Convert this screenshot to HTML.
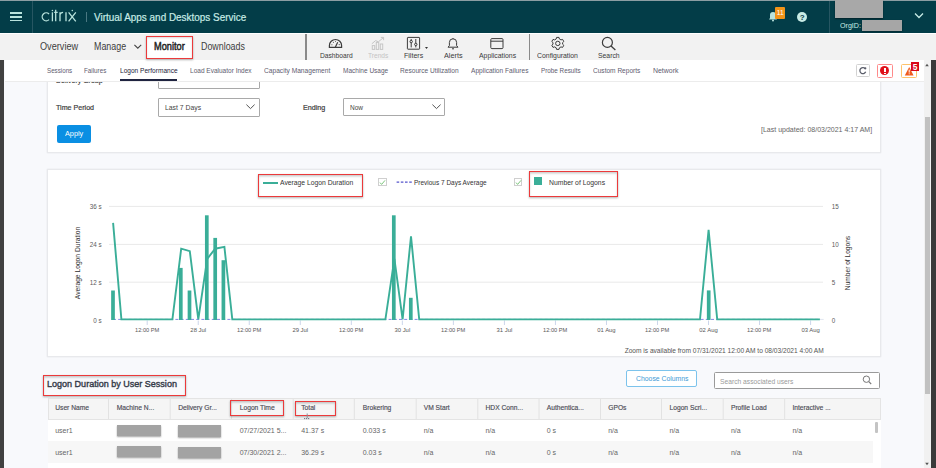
<!DOCTYPE html>
<html><head><meta charset="utf-8">
<style>
*{box-sizing:border-box}
html,body{margin:0;padding:0;width:936px;height:468px;overflow:hidden;background:#f8f9fc;font-family:"Liberation Sans",sans-serif}
.abs{position:absolute}
.t{position:absolute;white-space:nowrap;line-height:normal;transform-origin:0 0;font-family:"Liberation Sans",sans-serif}
</style></head><body>
<!-- filter card -->
<div class="abs" style="left:46.5px;top:60px;width:834px;height:92.6px;background:#fff;border:1px solid #e8e9ec;box-shadow:0 0 1.5px rgba(0,0,0,.10)"></div>
<div class="abs" style="left:158px;top:70px;width:101.7px;height:18.8px;background:#fff;border:1px solid #a9a9a9;border-radius:1px"></div>
<div class="abs" style="left:158px;top:98px;width:101.7px;height:18.5px;background:#fff;border:1px solid #a9a9a9;border-radius:1px"></div>
<svg class="abs" style="left:245px;top:103px" width="11" height="8" viewBox="0 0 11 8"><path d="M1.4,1.6 L5.5,5.6 L9.6,1.6" fill="none" stroke="#555" stroke-width="1"/></svg>
<div class="abs" style="left:343.2px;top:98.3px;width:101.7px;height:18.2px;background:#fff;border:1px solid #a9a9a9;border-radius:1px"></div>
<svg class="abs" style="left:431px;top:103px" width="11" height="8" viewBox="0 0 11 8"><path d="M1.4,1.6 L5.5,5.6 L9.6,1.6" fill="none" stroke="#555" stroke-width="1"/></svg>
<div class="abs" style="left:56.5px;top:125.1px;width:34.6px;height:17.6px;background:#0a8fe3;border-radius:2px"></div>

<!-- chart card -->
<div class="abs" style="left:46.5px;top:169.2px;width:834px;height:188px;background:#fff;border:1px solid #e8e9ec;box-shadow:0 0 1.5px rgba(0,0,0,.10)"></div>
<!-- legend -->
<div class="abs" style="left:257.5px;top:173.5px;width:105.7px;height:23px;border:1.6px solid #ec3a3b;box-shadow:0 1px 2px rgba(0,0,0,.3), inset 0 1.5px 2px rgba(0,0,0,.2)"></div>
<div class="abs" style="left:262.8px;top:181.5px;width:15px;height:2px;background:#3aae98"></div>
<div class="abs" style="left:378px;top:178.2px;width:8.7px;height:8.2px;border:1px solid #cfcfcf;background:#fff"></div>
<svg class="abs" style="left:378px;top:178px" width="9" height="9" viewBox="0 0 9 9"><path d="M2,4.6 L3.6,6.4 L7,2.4" fill="none" stroke="#5cb85c" stroke-width="0.8"/></svg>
<svg class="abs" style="left:396px;top:181px" width="18" height="3" viewBox="0 0 18 3"><path d="M0.6,1.2 H16.6" stroke="#5555cc" stroke-width="1.2" stroke-dasharray="2.6,1.6"/></svg>
<div class="abs" style="left:513.7px;top:178.2px;width:8.7px;height:8.2px;border:1px solid #cfcfcf;background:#fff"></div>
<svg class="abs" style="left:513.7px;top:178px" width="9" height="9" viewBox="0 0 9 9"><path d="M2,4.6 L3.6,6.4 L7,2.4" fill="none" stroke="#5cb85c" stroke-width="0.8"/></svg>
<div class="abs" style="left:529.3px;top:171.3px;width:89.1px;height:25.3px;border:1.6px solid #ec3a3b;box-shadow:0 1px 2px rgba(0,0,0,.3), inset 0 1.5px 2px rgba(0,0,0,.2)"></div>
<div class="abs" style="left:534.4px;top:177.2px;width:7.7px;height:7.5px;background:#3aae98"></div>
<!-- vertical axis titles -->
<div class="t" style="left:77px;top:263.2px;font-size:6.7px;color:#2e2e2e;transform:translate(-50%,-50%) rotate(-90deg);transform-origin:center">Average Logon Duration</div>
<div class="t" style="left:847px;top:263.2px;font-size:6.6px;color:#333;transform:translate(-50%,-50%) rotate(-90deg);transform-origin:center">Number of Logons</div>
<svg class="abs" width="936" height="468" viewBox="0 0 936 468" style="left:0;top:0;pointer-events:none">
<g stroke="#e9e9e9" stroke-width="1"><line x1="109" y1="206.4" x2="823" y2="206.4"/><line x1="109" y1="244.4" x2="823" y2="244.4"/><line x1="109" y1="282.2" x2="823" y2="282.2"/></g>
<g stroke="#ccd6eb" stroke-width="1"><line x1="147.20" y1="320.5" x2="147.20" y2="325"/><line x1="198.23" y1="320.5" x2="198.23" y2="325"/><line x1="249.26" y1="320.5" x2="249.26" y2="325"/><line x1="300.29" y1="320.5" x2="300.29" y2="325"/><line x1="351.32" y1="320.5" x2="351.32" y2="325"/><line x1="402.35" y1="320.5" x2="402.35" y2="325"/><line x1="453.38" y1="320.5" x2="453.38" y2="325"/><line x1="504.41" y1="320.5" x2="504.41" y2="325"/><line x1="555.44" y1="320.5" x2="555.44" y2="325"/><line x1="606.47" y1="320.5" x2="606.47" y2="325"/><line x1="657.50" y1="320.5" x2="657.50" y2="325"/><line x1="708.53" y1="320.5" x2="708.53" y2="325"/><line x1="759.56" y1="320.5" x2="759.56" y2="325"/><line x1="810.59" y1="320.5" x2="810.59" y2="325"/></g>
<line x1="113" y1="319.4" x2="820" y2="319.4" stroke="#8585e6" stroke-width="1" stroke-dasharray="3,2.2"/><line x1="820" y1="319.4" x2="823.7" y2="319.4" stroke="#e0e6f0" stroke-width="1"/>
<g fill="#3aae98"><rect x="111.15" y="290.50" width="3.7" height="29.50"/><rect x="178.95" y="267.90" width="3.7" height="52.10"/><rect x="187.65" y="290.50" width="3.7" height="29.50"/><rect x="204.95" y="215.30" width="3.7" height="104.70"/><rect x="213.35" y="237.90" width="3.7" height="82.10"/><rect x="221.55" y="260.20" width="3.7" height="59.80"/><rect x="391.95" y="215.30" width="3.7" height="104.70"/><rect x="408.95" y="297.80" width="3.7" height="22.20"/><rect x="706.85" y="290.40" width="3.7" height="29.60"/></g>
<polyline points="113.1,222.9 121.4,319.4 172.4,319.4 181.2,248.7 189.8,251.2 198.3,319.4 207.2,258.9 215.2,248.7 224.4,246.9 232.3,319.4 385.4,319.4 394.4,258.8 402.6,319.4 411.0,236.3 419.2,319.4 700.0,319.4 708.6,229.9 717.2,319.4 819.9,319.4" fill="none" stroke="#3aae98" stroke-width="1.9" stroke-linejoin="miter"/>
</svg>

<!-- section -->
<div class="abs" style="left:42.5px;top:374.5px;width:143px;height:21.3px;border:1.6px solid #ec3a3b;box-shadow:0 1px 2px rgba(0,0,0,.3), inset 0 1.5px 2px rgba(0,0,0,.2)"></div>
<div class="abs" style="left:626.4px;top:370px;width:70.5px;height:16.7px;background:#fff;border:1px solid #7cc3ec;border-radius:2px"></div>
<div class="abs" style="left:713.7px;top:371.9px;width:166.7px;height:16.7px;background:#fff;border:1px solid #9a9a9a;border-radius:1.5px"></div>
<svg class="abs" style="left:861px;top:374px" width="12" height="12" viewBox="0 0 12 12"><circle cx="5.4" cy="5.2" r="3.2" fill="none" stroke="#777" stroke-width="1"/><path d="M7.8,7.6 L10.2,10" stroke="#777" stroke-width="1.1"/></svg>

<!-- table -->
<div class="abs" style="left:47.5px;top:398px;width:833px;height:70px;background:#fff"></div>
<div class="abs" style="left:47.5px;top:398px;width:833px;height:22px;background:#f5f5f5;border:1px solid #e4e4e4"></div>
<div class="abs" style="left:47.5px;top:441px;width:825px;height:21.5px;background:#f7f7f7"></div>
<svg class="abs" style="left:0;top:398px" width="936" height="22" viewBox="0 0 936 22">
<g stroke="#e2e2e2" stroke-width="1">
<line x1="108.5" y1="1" x2="108.5" y2="21"/><line x1="170.2" y1="1" x2="170.2" y2="21"/><line x1="231.6" y1="1" x2="231.6" y2="21"/>
<line x1="293.2" y1="1" x2="293.2" y2="21"/><line x1="354.3" y1="1" x2="354.3" y2="21"/><line x1="416.2" y1="1" x2="416.2" y2="21"/>
<line x1="477.8" y1="1" x2="477.8" y2="21"/><line x1="539" y1="1" x2="539" y2="21"/><line x1="600.5" y1="1" x2="600.5" y2="21"/>
<line x1="661.5" y1="1" x2="661.5" y2="21"/><line x1="723.2" y1="1" x2="723.2" y2="21"/><line x1="784.7" y1="1" x2="784.7" y2="21"/>
</g></svg>
<div class="abs" style="left:230px;top:400px;width:54.3px;height:16.3px;border:1.6px solid #ec3a3b;box-shadow:0 1px 2px rgba(0,0,0,.3), inset 0 1.5px 2px rgba(0,0,0,.2)"></div>
<div class="abs" style="left:294.5px;top:400.5px;width:41.3px;height:15.8px;border:1.6px solid #ec3a3b;box-shadow:0 1px 2px rgba(0,0,0,.3), inset 0 1.5px 2px rgba(0,0,0,.2)"></div>
<div class="abs" style="left:117px;top:424.5px;width:43.8px;height:11px;background:#a3a3a3;box-shadow:0 1px 1.5px rgba(0,0,0,.35)"></div>
<div class="abs" style="left:177.5px;top:425px;width:43.8px;height:11.8px;background:#a3a3a3;box-shadow:0 1px 1.5px rgba(0,0,0,.35)"></div>
<div class="abs" style="left:117px;top:446px;width:43.8px;height:11px;background:#a3a3a3;box-shadow:0 1px 1.5px rgba(0,0,0,.35)"></div>
<div class="abs" style="left:177.5px;top:446.5px;width:43.8px;height:11.8px;background:#a3a3a3;box-shadow:0 1px 1.5px rgba(0,0,0,.35)"></div>
<svg class="abs" style="left:302px;top:412px" width="10" height="8" viewBox="0 0 10 8"><path d="M5.2,1.5 V6" stroke="#8a9099" stroke-width="1"/><path d="M2.2,6.6 H8.2" stroke="#4a5060" stroke-width="1" stroke-dasharray="1,1"/></svg>
<div class="abs" style="left:874.8px;top:421.7px;width:3.4px;height:11.7px;background:#c4c4c4;border-radius:1px"></div>
<div class="t" style="left:55.72px;top:75.72px;font-size:7.6px;color:#3b3b3b;transform:scaleX(0.9191);-webkit-text-stroke:0.2px #3b3b3b;">Delivery Group</div>
<div class="t" style="left:55.82px;top:102.82px;font-size:7.6px;color:#3b3b3b;transform:scaleX(0.9364);-webkit-text-stroke:0.2px #3b3b3b;">Time Period</div>
<div class="t" style="left:164.63px;top:103.00px;font-size:7.4px;color:#444;transform:scaleX(0.9235);">Last 7 Days</div>
<div class="t" style="left:303.31px;top:102.82px;font-size:7.6px;color:#3b3b3b;transform:scaleX(0.9458);-webkit-text-stroke:0.2px #3b3b3b;">Ending</div>
<div class="t" style="left:350.24px;top:103.00px;font-size:7.4px;color:#444;transform:scaleX(0.8800);">Now</div>
<div class="t" style="left:64.71px;top:129.22px;font-size:7.6px;color:#ffffff;transform:scaleX(0.9569);">Apply</div>
<div class="t" style="left:760.72px;top:124.88px;font-size:7.2px;color:#666;transform:scaleX(0.9760);">[Last updated: 08/03/2021 4:17 AM]</div>
<div class="t" style="left:280.23px;top:177.69px;font-size:7.3px;color:#333;transform:scaleX(0.9273);">Average Logon Duration</div>
<div class="t" style="left:414.24px;top:177.69px;font-size:7.3px;color:#333;transform:scaleX(0.8876);">Previous 7 Days Average</div>
<div class="t" style="left:548.73px;top:177.69px;font-size:7.3px;color:#333;transform:scaleX(0.9334);">Number of Logons</div>
<div class="t" style="left:89.69px;top:202.90px;font-size:6.3px;color:#5c5c5c;">36 s</div>
<div class="t" style="left:89.69px;top:240.90px;font-size:6.3px;color:#5c5c5c;">24 s</div>
<div class="t" style="left:89.69px;top:278.70px;font-size:6.3px;color:#5c5c5c;">12 s</div>
<div class="t" style="left:93.19px;top:316.50px;font-size:6.3px;color:#5c5c5c;">0 s</div>
<div class="t" style="left:831.65px;top:202.90px;font-size:6.3px;color:#5c5c5c;">15</div>
<div class="t" style="left:831.65px;top:240.90px;font-size:6.3px;color:#5c5c5c;">10</div>
<div class="t" style="left:831.65px;top:278.70px;font-size:6.3px;color:#5c5c5c;">5</div>
<div class="t" style="left:831.65px;top:316.50px;font-size:6.3px;color:#5c5c5c;">0</div>
<div class="t" style="left:135.07px;top:327.46px;font-size:5.9px;color:#585858;transform:scaleX(0.9617);">12:00 PM</div>
<div class="t" style="left:190.36px;top:327.46px;font-size:5.9px;color:#585858;">28 Jul</div>
<div class="t" style="left:237.13px;top:327.46px;font-size:5.9px;color:#585858;transform:scaleX(0.9617);">12:00 PM</div>
<div class="t" style="left:292.42px;top:327.46px;font-size:5.9px;color:#585858;">29 Jul</div>
<div class="t" style="left:339.19px;top:327.46px;font-size:5.9px;color:#585858;transform:scaleX(0.9617);">12:00 PM</div>
<div class="t" style="left:394.48px;top:327.46px;font-size:5.9px;color:#585858;">30 Jul</div>
<div class="t" style="left:441.25px;top:327.46px;font-size:5.9px;color:#585858;transform:scaleX(0.9617);">12:00 PM</div>
<div class="t" style="left:496.54px;top:327.46px;font-size:5.9px;color:#585858;">31 Jul</div>
<div class="t" style="left:543.31px;top:327.46px;font-size:5.9px;color:#585858;transform:scaleX(0.9617);">12:00 PM</div>
<div class="t" style="left:597.29px;top:327.46px;font-size:5.9px;color:#585858;">01 Aug</div>
<div class="t" style="left:645.37px;top:327.46px;font-size:5.9px;color:#585858;transform:scaleX(0.9617);">12:00 PM</div>
<div class="t" style="left:699.35px;top:327.46px;font-size:5.9px;color:#585858;">02 Aug</div>
<div class="t" style="left:747.43px;top:327.46px;font-size:5.9px;color:#585858;transform:scaleX(0.9617);">12:00 PM</div>
<div class="t" style="left:801.41px;top:327.46px;font-size:5.9px;color:#585858;">03 Aug</div>
<div class="t" style="left:624.64px;top:346.83px;font-size:6.6px;color:#555;">Zoom is available from 07/31/2021 12:00 AM to 08/03/2021 4:00 AM</div>
<div class="t" style="left:47.44px;top:378.23px;font-size:9.8px;color:#343a48;transform:scaleX(0.9211);-webkit-text-stroke:0.4px #343a48;">Logon Duration by User Session</div>
<div class="t" style="left:635.53px;top:374.12px;font-size:7.6px;color:#3e9ad6;transform:scaleX(0.9021);">Choose Columns</div>
<div class="t" style="left:719.53px;top:376.50px;font-size:7.4px;color:#9a9a9a;transform:scaleX(0.9073);">Search associated users</div>
<div class="t" style="left:55.23px;top:403.84px;font-size:6.7px;color:#4d4d57;-webkit-text-stroke:0.15px #4d4d57;">User Name</div>
<div class="t" style="left:116.73px;top:403.84px;font-size:6.7px;color:#4d4d57;-webkit-text-stroke:0.15px #4d4d57;">Machine N...</div>
<div class="t" style="left:178.23px;top:403.84px;font-size:6.7px;color:#4d4d57;-webkit-text-stroke:0.15px #4d4d57;">Delivery Gr...</div>
<div class="t" style="left:239.73px;top:403.84px;font-size:6.7px;color:#4d4d57;-webkit-text-stroke:0.15px #4d4d57;">Logon Time</div>
<div class="t" style="left:301.23px;top:403.84px;font-size:6.7px;color:#4d4d57;-webkit-text-stroke:0.15px #4d4d57;">Total</div>
<div class="t" style="left:362.73px;top:403.84px;font-size:6.7px;color:#4d4d57;-webkit-text-stroke:0.15px #4d4d57;">Brokering</div>
<div class="t" style="left:423.73px;top:403.84px;font-size:6.7px;color:#4d4d57;-webkit-text-stroke:0.15px #4d4d57;">VM Start</div>
<div class="t" style="left:485.48px;top:403.84px;font-size:6.7px;color:#4d4d57;-webkit-text-stroke:0.15px #4d4d57;">HDX Conn...</div>
<div class="t" style="left:546.73px;top:403.84px;font-size:6.7px;color:#4d4d57;-webkit-text-stroke:0.15px #4d4d57;">Authentica...</div>
<div class="t" style="left:608.23px;top:403.84px;font-size:6.7px;color:#4d4d57;-webkit-text-stroke:0.15px #4d4d57;">GPOs</div>
<div class="t" style="left:669.48px;top:403.84px;font-size:6.7px;color:#4d4d57;-webkit-text-stroke:0.15px #4d4d57;">Logon Scri...</div>
<div class="t" style="left:730.93px;top:403.84px;font-size:6.7px;color:#4d4d57;-webkit-text-stroke:0.15px #4d4d57;">Profile Load</div>
<div class="t" style="left:792.43px;top:403.84px;font-size:6.7px;color:#4d4d57;-webkit-text-stroke:0.15px #4d4d57;">Interactive ...</div>
<div class="t" style="left:55.22px;top:426.97px;font-size:7.0px;color:#666;">user1</div>
<div class="t" style="left:239.72px;top:426.97px;font-size:7.0px;color:#666;">07/27/2021 5...</div>
<div class="t" style="left:301.22px;top:426.97px;font-size:7.0px;color:#666;">41.37 s</div>
<div class="t" style="left:362.72px;top:426.97px;font-size:7.0px;color:#666;">0.033 s</div>
<div class="t" style="left:423.72px;top:426.97px;font-size:7.0px;color:#666;">n/a</div>
<div class="t" style="left:485.47px;top:426.97px;font-size:7.0px;color:#666;">n/a</div>
<div class="t" style="left:546.72px;top:426.97px;font-size:7.0px;color:#666;">0 s</div>
<div class="t" style="left:608.22px;top:426.97px;font-size:7.0px;color:#666;">n/a</div>
<div class="t" style="left:669.47px;top:426.97px;font-size:7.0px;color:#666;">n/a</div>
<div class="t" style="left:730.92px;top:426.97px;font-size:7.0px;color:#666;">n/a</div>
<div class="t" style="left:792.42px;top:426.97px;font-size:7.0px;color:#666;">n/a</div>
<div class="t" style="left:55.22px;top:448.56px;font-size:7.0px;color:#666;">user1</div>
<div class="t" style="left:239.72px;top:448.56px;font-size:7.0px;color:#666;">07/30/2021 2...</div>
<div class="t" style="left:301.22px;top:448.56px;font-size:7.0px;color:#666;">36.29 s</div>
<div class="t" style="left:362.72px;top:448.56px;font-size:7.0px;color:#666;">0.03 s</div>
<div class="t" style="left:423.72px;top:448.56px;font-size:7.0px;color:#666;">n/a</div>
<div class="t" style="left:485.47px;top:448.56px;font-size:7.0px;color:#666;">n/a</div>
<div class="t" style="left:546.72px;top:448.56px;font-size:7.0px;color:#666;">0 s</div>
<div class="t" style="left:608.22px;top:448.56px;font-size:7.0px;color:#666;">n/a</div>
<div class="t" style="left:669.47px;top:448.56px;font-size:7.0px;color:#666;">n/a</div>
<div class="t" style="left:730.92px;top:448.56px;font-size:7.0px;color:#666;">n/a</div>
<div class="t" style="left:792.42px;top:448.56px;font-size:7.0px;color:#666;">n/a</div>
<!-- subnav (over content) -->
<div class="abs" style="left:4.5px;top:60px;width:919px;height:21.8px;background:#fff;border-bottom:1px solid #ececec"></div>
<div class="abs" style="left:119.9px;top:79.2px;width:57.1px;height:2px;background:#1f2440"></div>
<!-- subnav right icons -->
<div class="abs" style="left:856.2px;top:64.4px;width:13.6px;height:12.4px;background:#fff;border:1.2px solid #d2d2d2;border-radius:1.5px"></div>
<svg class="abs" style="left:856px;top:64px" width="14" height="13" viewBox="0 0 14 13">
<path d="M9.4,5 A3,3 0 1 0 9.7,7.8" fill="none" stroke="#5a5d6a" stroke-width="1.3"/>
<circle cx="9.3" cy="4.3" r="1.1" fill="#5a5d6a"/>
</svg>
<div class="abs" style="left:876.8px;top:63.7px;width:15.9px;height:14.1px;background:#fff;border:1px solid #ff8a8a;border-radius:1.5px"></div>
<div class="abs" style="left:880.3px;top:66.2px;width:9.2px;height:9.2px;border-radius:50%;background:#e0101a"></div>
<div class="abs" style="left:884.3px;top:67.6px;width:1.3px;height:4.2px;background:#fff"></div>
<div class="abs" style="left:884.3px;top:72.6px;width:1.3px;height:1.3px;background:#fff"></div>
<div class="abs" style="left:901px;top:63.7px;width:16.1px;height:14.1px;background:#fff;border:1px solid #ffc36a;border-radius:1.5px"></div>
<svg class="abs" style="left:901px;top:63px" width="17" height="15" viewBox="0 0 17 15">
<path d="M8.2,4 L12.6,12.4 H3.8 Z" fill="#ef5a1e"/>
<rect x="7.7" y="6.6" width="1" height="3" fill="#fff"/><rect x="7.7" y="10.3" width="1" height="1" fill="#fff"/>
</svg>
<div class="abs" style="left:911.1px;top:62.1px;width:8.3px;height:8.8px;background:#d9091b"></div>
<svg class="abs" style="left:0;top:0" width="936" height="80" viewBox="0 0 936 80"><text x="915.2" y="69.6" font-family="Liberation Sans" font-size="8.4" font-weight="700" fill="#fff" text-anchor="middle">5</text></svg>

<!-- header -->
<div class="abs" style="left:0;top:0;width:936px;height:33px;background:#033d48"></div>
<div class="abs" style="left:0;top:0;width:936px;height:1px;background:#8c9ea3"></div>
<div class="abs" style="left:32px;top:1px;width:1px;height:32px;background:#275662"></div>
<div class="abs" style="left:829px;top:1px;width:1px;height:32px;background:#275662"></div>
<!-- hamburger -->
<div class="abs" style="left:10px;top:12px;width:12.4px;height:1.6px;background:#b9e3dd"></div>
<div class="abs" style="left:10px;top:16px;width:12.4px;height:1.6px;background:#b9e3dd"></div>
<div class="abs" style="left:10px;top:19.8px;width:12.4px;height:1.6px;background:#b9e3dd"></div>
<!-- citrix logo -->
<svg class="abs" style="left:40px;top:8px" width="40" height="16" viewBox="0 0 40 16">
<g fill="none" stroke="#b9e3dd" stroke-width="1.3">
<path d="M9.03,5.97 A4,4 0 1 0 9.03,11.63"/>
<path d="M12.4,4.3 V13.3"/>
<path d="M15.7,1.8 V13.3 M14.2,4.3 H17.7"/>
<path d="M20,4.3 V13.3 M20,6.6 Q20.7,4.3 23.1,4.3"/>
<path d="M26,4.3 V13.3"/>
<path d="M28.6,4.3 L35.8,13.3 M35.8,4.3 L28.6,13.3"/>
</g>
<circle cx="12.4" cy="2.5" r="0.8" fill="#b9e3dd"/>
<circle cx="32.3" cy="2.5" r="0.8" fill="#b9e3dd"/>
</svg>
<div class="abs" style="left:85.6px;top:12px;width:1px;height:10px;background:#4a7882"></div>
<!-- header right -->
<svg class="abs" style="left:767px;top:10px" width="12" height="12" viewBox="0 0 12 12">
<path d="M2,9.5 H10 L9,8 V5 A3,3 0 0 0 3,5 V8 Z" fill="#b9e3dd"/><circle cx="6" cy="10.6" r="1" fill="#b9e3dd"/>
</svg>
<div class="abs" style="left:775.4px;top:7px;width:9.9px;height:11.8px;background:#f39419;border-radius:1px"></div>
<svg class="abs" style="left:0;top:0" width="936" height="33" viewBox="0 0 936 33"><text x="780.3" y="15.4" font-family="Liberation Sans" font-size="6.6" fill="#fff" text-anchor="middle">11</text></svg>
<div class="abs" style="left:797.3px;top:12.3px;width:10px;height:10px;border-radius:50%;background:#c9ece6"></div>
<div class="t" style="left:799.8px;top:13px;font-size:8px;font-weight:700;color:#053a47">?</div>
<div class="abs" style="left:834.7px;top:0;width:48.3px;height:18.3px;background:#a8a8a8;box-shadow:0 1px 1.5px rgba(0,0,0,.45)"></div>
<div class="abs" style="left:861.7px;top:19.9px;width:40.4px;height:11px;background:#a6a6a6;box-shadow:0 1px 2px rgba(0,0,0,.35)"></div>
<svg class="abs" style="left:913px;top:11px" width="12" height="9" viewBox="0 0 12 9">
<path d="M2,2.5 L6,6.5 L10,2.5" fill="none" stroke="#c9ece6" stroke-width="1.3"/>
</svg>

<!-- nav -->
<div class="abs" style="left:0;top:33px;width:936px;height:27px;background:#f2f2f2"></div>
<div class="abs" style="left:0;top:33px;width:936px;height:1px;background:#ffffff"></div>
<svg class="abs" style="left:132px;top:43px" width="12" height="8" viewBox="0 0 12 8">
<path d="M2.4,1.8 L5.8,5.2 L9.2,1.8" fill="none" stroke="#444" stroke-width="1.1"/>
</svg>
<div class="abs" style="left:145.5px;top:36px;width:47px;height:22.8px;background:#fff;border:1.6px solid #ec3a3b;box-shadow:0 1px 2px rgba(0,0,0,.3), inset 0 1px 2px rgba(0,0,0,.15)"></div>
<div class="abs" style="left:305.3px;top:34px;width:1.4px;height:26px;background:#8a8a8a"></div>
<div class="abs" style="left:529px;top:34px;width:1.4px;height:26px;background:#8a8a8a"></div>
<!-- nav icons -->
<svg class="abs" style="left:0;top:0" width="936" height="60" viewBox="0 0 936 60">
<g fill="none" stroke="#3c3c3c" stroke-width="1">
 <!-- dashboard gauge -->
 <path d="M329.4,47.4 V45.6 A6.1,6.1 0 0 1 341.6,45.6 V47.4 Z" stroke-width="1.2"/>
 <path d="M335.3,47.2 L337.7,42.2" stroke-width="1.2"/>
 <g fill="#3c3c3c" stroke="none"><circle cx="331.9" cy="44.8" r="0.55"/><circle cx="333.4" cy="42.3" r="0.55"/><circle cx="335.5" cy="41.3" r="0.5"/><circle cx="339.2" cy="44.6" r="0.55"/></g>
 <!-- filters -->
 <rect x="407.4" y="37.4" width="12.2" height="11.8" rx="0.5"/>
 <path d="M411.2,39 V47.4 M415.8,39 V47.4"/>
 <circle cx="411.2" cy="41.6" r="1.2" fill="#f2f2f2"/>
 <circle cx="415.8" cy="44.4" r="1.2" fill="#f2f2f2"/>
 <!-- alerts bell -->
 <path d="M448,47.2 H458 L456.6,45.6 V42.4 A3.6,3.6 0 0 0 449.4,42.4 V45.6 Z"/>
 <path d="M452,48.8 H454"/>
 <path d="M453,38 V38.8"/>
 <!-- applications -->
 <rect x="490.8" y="38.6" width="12.2" height="10" rx="1"/>
 <path d="M490.8,41.2 H503"/>
 <!-- gear -->
 <circle cx="557.8" cy="43.4" r="2.2"/>
 <path d="M556.6,37.4 h2.4 l0.4,1.6 l1.6,0.9 l1.6,-0.5 l1.2,2.1 l-1.2,1.1 v1.6 l1.2,1.1 l-1.2,2.1 l-1.6,-0.5 l-1.6,0.9 l-0.4,1.6 h-2.4 l-0.4,-1.6 l-1.6,-0.9 l-1.6,0.5 l-1.2,-2.1 l1.2,-1.1 v-1.6 l-1.2,-1.1 l1.2,-2.1 l1.6,0.5 l1.6,-0.9 Z"/>
 <!-- search -->
 <circle cx="607.4" cy="42.4" r="5" stroke-width="1.2"/>
 <path d="M611,46 L615.4,50" stroke-width="1.3"/>
</g>
<path d="M425,47 h3 l-1.5,2 z" fill="#333"/>
<!-- trends (disabled) -->
<g fill="none" stroke="#c6c6c6" stroke-width="1">
 <path d="M371.8,43.8 L375.6,40.6 L378.4,41.8 L383.4,37.6"/>
 <path d="M380.8,37.4 H383.6 V40.2"/>
 <rect x="372.3" y="45.6" width="2.4" height="3.8"/>
 <rect x="376.3" y="42.4" width="2.4" height="7"/>
 <rect x="380.3" y="44" width="2.4" height="5.4"/>
</g>
</svg>

<div class="t" style="left:93.50px;top:10.97px;font-size:11.3px;color:#c9ece6;transform:scaleX(0.8792);-webkit-text-stroke:0.2px #c9ece6;">Virtual Apps and Desktops Service</div>
<div class="t" style="left:839.62px;top:21.36px;font-size:8.0px;color:#c9ece6;transform:scaleX(0.8900);">OrgID:</div>
<div class="t" style="left:40.23px;top:41.35px;font-size:10.0px;color:#3d3d3d;transform:scaleX(0.9147);">Overview</div>
<div class="t" style="left:93.54px;top:41.35px;font-size:10.0px;color:#3d3d3d;transform:scaleX(0.8885);">Manage</div>
<div class="t" style="left:153.53px;top:40.89px;font-size:10.4px;color:#222222;transform:scaleX(0.8869);-webkit-text-stroke:0.45px #222;">Monitor</div>
<div class="t" style="left:200.95px;top:41.35px;font-size:10.0px;color:#3d3d3d;transform:scaleX(0.8873);">Downloads</div>
<div class="t" style="left:319.63px;top:50.90px;font-size:7.4px;color:#3a3a3a;transform:scaleX(0.9026);">Dashboard</div>
<div class="t" style="left:367.74px;top:50.90px;font-size:7.4px;color:#c4c4c4;transform:scaleX(0.8942);">Trends</div>
<div class="t" style="left:403.52px;top:50.90px;font-size:7.4px;color:#3a3a3a;transform:scaleX(0.9522);">Filters</div>
<div class="t" style="left:443.91px;top:50.90px;font-size:7.4px;color:#3a3a3a;transform:scaleX(0.9828);">Alerts</div>
<div class="t" style="left:478.52px;top:50.90px;font-size:7.4px;color:#3a3a3a;transform:scaleX(0.9321);">Applications</div>
<div class="t" style="left:537.32px;top:50.90px;font-size:7.4px;color:#3a3a3a;transform:scaleX(0.9314);">Configuration</div>
<div class="t" style="left:598.23px;top:50.90px;font-size:7.4px;color:#3a3a3a;transform:scaleX(0.9242);">Search</div>
<div class="t" style="left:46.75px;top:66.49px;font-size:7.3px;color:#5e5d70;transform:scaleX(0.8510);">Sessions</div>
<div class="t" style="left:84.45px;top:66.49px;font-size:7.3px;color:#5e5d70;transform:scaleX(0.8593);">Failures</div>
<div class="t" style="left:119.64px;top:66.49px;font-size:7.3px;color:#22223a;transform:scaleX(0.8991);">Logon Performance</div>
<div class="t" style="left:190.14px;top:66.49px;font-size:7.3px;color:#5e5d70;transform:scaleX(0.8935);">Load Evaluator Index</div>
<div class="t" style="left:263.83px;top:66.49px;font-size:7.3px;color:#5e5d70;transform:scaleX(0.9084);">Capacity Management</div>
<div class="t" style="left:342.54px;top:66.49px;font-size:7.3px;color:#5e5d70;transform:scaleX(0.8919);">Machine Usage</div>
<div class="t" style="left:400.14px;top:66.49px;font-size:7.3px;color:#5e5d70;transform:scaleX(0.9035);">Resource Utilization</div>
<div class="t" style="left:471.04px;top:66.49px;font-size:7.3px;color:#5e5d70;transform:scaleX(0.9017);">Application Failures</div>
<div class="t" style="left:540.85px;top:66.49px;font-size:7.3px;color:#5e5d70;transform:scaleX(0.8661);">Probe Results</div>
<div class="t" style="left:593.24px;top:66.49px;font-size:7.3px;color:#5e5d70;transform:scaleX(0.8977);">Custom Reports</div>
<div class="t" style="left:652.92px;top:66.49px;font-size:7.3px;color:#5e5d70;transform:scaleX(0.9510);">Network</div>
<!-- dark frame strips -->
<div class="abs" style="left:0;top:60px;width:4.2px;height:408px;background:#414141"></div>
<div class="abs" style="left:931px;top:60px;width:5px;height:408px;background:#3a3a3a"></div>
<!-- scrollbar -->
<div class="abs" style="left:923.5px;top:60px;width:7.5px;height:408px;background:#f1f1f1"></div>
<div class="abs" style="left:924.5px;top:117px;width:5.5px;height:277px;background:#c1c1c1"></div>
<svg class="abs" style="left:923px;top:60px" width="8" height="408" viewBox="0 0 8 408">
<path d="M2.2,6.2 L4,3.8 L5.8,6.2 Z" fill="#555"/>
<path d="M2.2,402.8 L4,405.2 L5.8,402.8 Z" fill="#555"/>
</svg>


</body></html>
